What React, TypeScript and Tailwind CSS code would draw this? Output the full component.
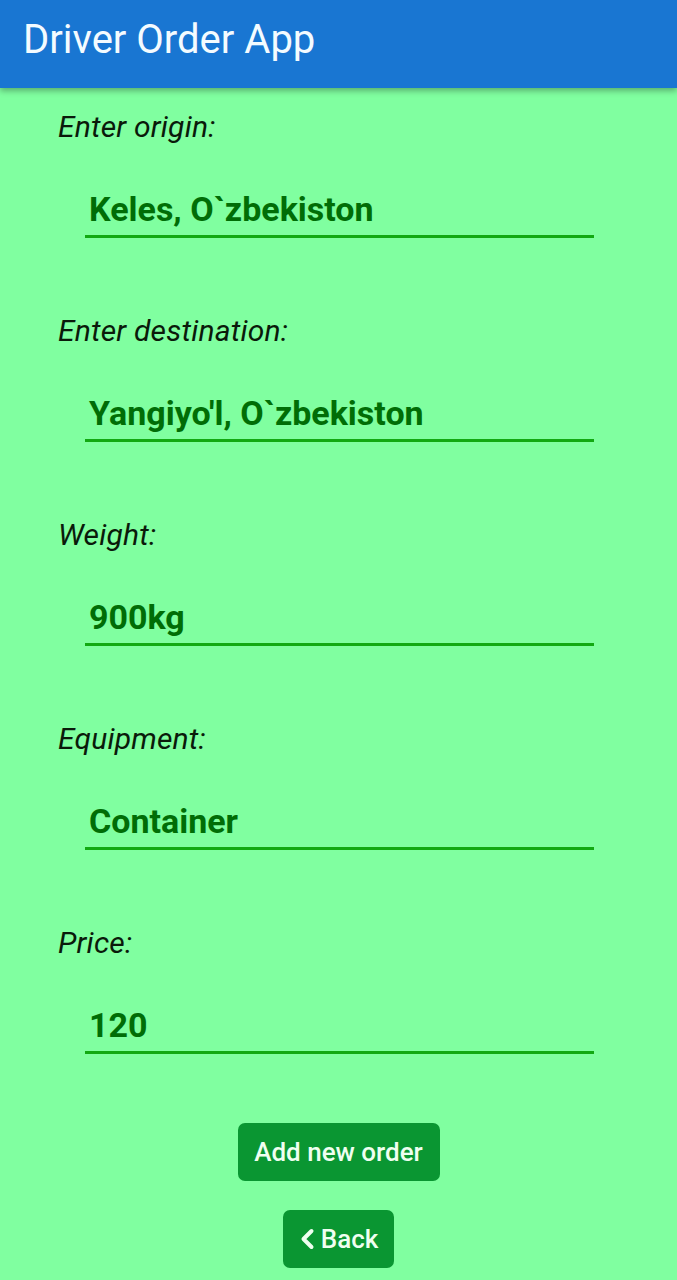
import React from "react";

const fields = [
  { label: "Enter origin:", value: "Keles, O`zbekiston" },
  { label: "Enter destination:", value: "Yangiyo'l, O`zbekiston" },
  { label: "Weight:", value: "900kg" },
  { label: "Equipment:", value: "Container" },
  { label: "Price:", value: "120" },
];

export default function App() {
  return (
    <div className="min-h-[1280px] w-full bg-[#80ffa0] font-['Roboto',sans-serif]">
      <header className="relative z-10 flex h-[88px] items-center bg-[#1976d2] pl-[23px] shadow-[0_3px_6px_rgba(0,0,0,0.3)]">
        <h1 className="pb-[8px] text-[40px] leading-none text-[#f4fbff]">Driver Order App</h1>
      </header>
      <div className="pl-[58px] pt-[21px]">
        {fields.map((f) => (
          <div key={f.label} className="mb-[75px] last:mb-0">
            <div className="text-[30px] font-normal italic leading-[36px] tracking-[0.2px] text-[#0a1a0a]">{f.label}</div>
            <div className="ml-[27px] mt-[44px] w-[509px] border-b-[3px] border-[#12a912] pb-[6px] pl-[4px] text-[34px] font-bold leading-[40px] text-[#006d06]">
              {f.value}
            </div>
          </div>
        ))}
      </div>
      <div className="mt-[69px] flex flex-col items-center gap-[29px]">
        <button className="h-[58px] w-[202px] rounded-[7px] bg-[#0a9632] text-[26px] font-medium text-[#effff0]">
          Add new order
        </button>
        <button className="flex h-[58px] w-[111px] items-center justify-center gap-[6px] rounded-[7px] bg-[#0a9632] text-[26px] font-medium text-[#effff0]">
          <svg width="16" height="24" viewBox="0 0 16 24" fill="none">
            <path d="M12.5 4 L4.5 12 L12.5 20" stroke="#effff0" strokeWidth="4" strokeLinecap="round" strokeLinejoin="round" />
          </svg>
          Back
        </button>
      </div>
    </div>
  );
}
